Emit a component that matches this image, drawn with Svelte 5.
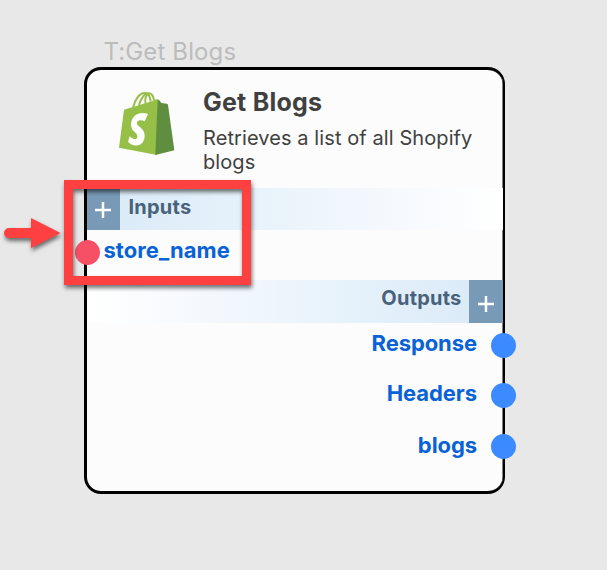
<script>
  const outputs = ['Response', 'Headers', 'blogs'];
</script>

<main>
  <div class="tag">T:Get Blogs</div>
  <section class="card">
    <header>
      <svg class="logo" viewBox="0 0 225 225">
        <g fill="none" stroke="#95bf47" stroke-width="6">
          <path d="M69 68C75 44 89 23 104 24C116 24 121 35 122 50" />
          <path d="M87 63C90 42 104 23 117 25C126 26 131 34 132 48" />
          <path d="M107 57C104 43 107 31 116 26" />
        </g>
        <path fill="#95bf47" d="M42 74L128 48L135 44Q142 41 144 45L141 210L27 188Z" />
        <path fill="#5e8e3e" d="M143 43Q150 46 154 54L171 56Q173 56 174 60L193 196L136 210Z" />
        <path fill="#fff" transform="translate(20.5 18.5) scale(7.15 8)" d="M11.71 11.305s-.81-.424-1.774-.424c-1.447 0-1.504.906-1.504 1.141 0 1.232 3.24 1.715 3.24 4.629 0 2.295-1.44 3.76-3.406 3.76-2.354 0-3.54-1.465-3.54-1.465l.646-2.086s1.245 1.066 2.28 1.066c.675 0 .975-.545.975-.932 0-1.619-2.654-1.694-2.654-4.359-.034-2.237 1.571-4.416 4.827-4.416 1.257 0 2.275.361 2.275.361Z" />
      </svg>
      <div class="heading">
        <h1>Get Blogs</h1>
        <p>Retrieves a list of all Shopify<br />blogs</p>
      </div>
    </header>

    <div class="bar inputs">
      <span class="add"><svg viewBox="0 0 18 18"><path d="M9 1V17M1 9H17" /></svg></span>
      <span class="title">Inputs</span>
    </div>
    <div class="input-row"><i class="port red"></i><span>store_name</span></div>

    <div class="bar outputs">
      <span class="title">Outputs</span>
      <span class="add"><svg viewBox="0 0 18 18"><path d="M9 1V17M1 9H17" /></svg></span>
    </div>
    <ul>
      {#each outputs as name}
        <li><span>{name}</span><i class="port"></i></li>
      {/each}
    </ul>
  </section>

  <div class="highlight"></div>
  <svg class="arrow" viewBox="0 0 70 50">
    <path d="M9 18H31V8L60.500 23L31 38V28H9A5 5 0 0 1 9 18Z" fill="#ff4040" />
  </svg>
</main>

<style>
  main {
    position: relative;
    box-sizing: border-box;
    width: 607px;
    height: 570px;
    padding: 36px 102px 0 84px;
    overflow: hidden;
    background: #e8e8e8;
    font-family: Inter, sans-serif;
  }
  .tag {
    height: 31px;
    padding-left: 19.500px;
    font-size: 24px;
    line-height: 31px;
    letter-spacing: 0.12px;
    color: #bcbcbc;
  }
  .card {
    box-sizing: border-box;
    width: 421px;
    height: 427px;
    border: 3px solid #000;
    border-right-width: 2px;
    border-radius: 17px;
    background: #fcfcfc;
    box-shadow: inset -0.500px 0 0 #000;
  }
  header {
    display: flex;
    height: 118px;
  }
  .logo {
    flex: none;
    width: 75px;
    height: 75px;
    margin: 15px 18px 0 23px;
  }
  .heading { color: #404040; white-space: nowrap; }
  h1 {
    margin: 17px 0 0;
    font-size: 25px;
    line-height: 30px;
    font-weight: 700;
    letter-spacing: 0.23px;
  }
  p {
    margin: 9px 0 0;
    font-size: 20px;
    line-height: 24px;
    letter-spacing: 0.09px;
  }
  .bar {
    display: flex;
    font-size: 20px;
    font-weight: 700;
    letter-spacing: 0.22px;
    color: #49627c;
  }
  .inputs {
    height: 42px;
    background: linear-gradient(90deg, #d8e9f7, #e8f3fb 42%, #f2f7fd 65%, #fff);
  }
  .outputs {
    justify-content: flex-end;
    height: 43px;
    background: linear-gradient(270deg, #d8e9f7, #e8f3fb 42%, #f2f7fd 65%, #fff);
  }
  .inputs .title { padding-left: 8.500px; line-height: 38px; }
  .outputs .title { padding-right: 7.500px; line-height: 37px; }
  .add {
    display: flex;
    align-items: center;
    justify-content: center;
    box-sizing: border-box;
    width: 34px;
    background: #789ab6;
  }
  .inputs .add { width: 33px; padding: 2px 1px 0 0; }
  .outputs .add { padding-top: 5px; }
  .add svg { width: 18px; height: 18px; }
  .add path { stroke: #fff; stroke-width: 2.5; }
  .port {
    flex: none;
    width: 25px;
    height: 25px;
    border-radius: 50%;
    background: #3b8aff;
  }
  .port.red { background: #f55066; }
  .input-row, li {
    display: flex;
    align-items: center;
    font-size: 22px;
    font-weight: 700;
    color: #0962d6;
  }
  .input-row {
    height: 50px;
    margin-left: -12.500px;
    gap: 4px;
    letter-spacing: 0.03px;
  }
  .input-row .port { position: relative; top: -3px; }
  .input-row span { padding-bottom: 11px; }
  ul {
    display: flex;
    flex-direction: column;
    margin: -3px -13px 0 0;
    padding: 0;
    list-style: none;
  }
  li {
    justify-content: flex-end;
    height: 50.500px;
    gap: 14px;
    letter-spacing: -0.08px;
  }
  li span { padding-bottom: 5px; }
  li:nth-child(2) span { padding-bottom: 6px; }
  li:last-child span { padding-bottom: 3px; }
  .highlight {
    position: absolute;
    left: 64px;
    top: 180px;
    box-sizing: border-box;
    width: 187px;
    height: 105px;
    border: 9px solid #ff4040;
    filter: drop-shadow(1px 3px 2px rgb(0 0 0 / 0.55));
  }
  .arrow {
    position: absolute;
    left: 0;
    top: 210px;
    width: 70px;
    height: 50px;
    filter: drop-shadow(1px 3px 2px rgb(0 0 0 / 0.55));
  }
</style>
